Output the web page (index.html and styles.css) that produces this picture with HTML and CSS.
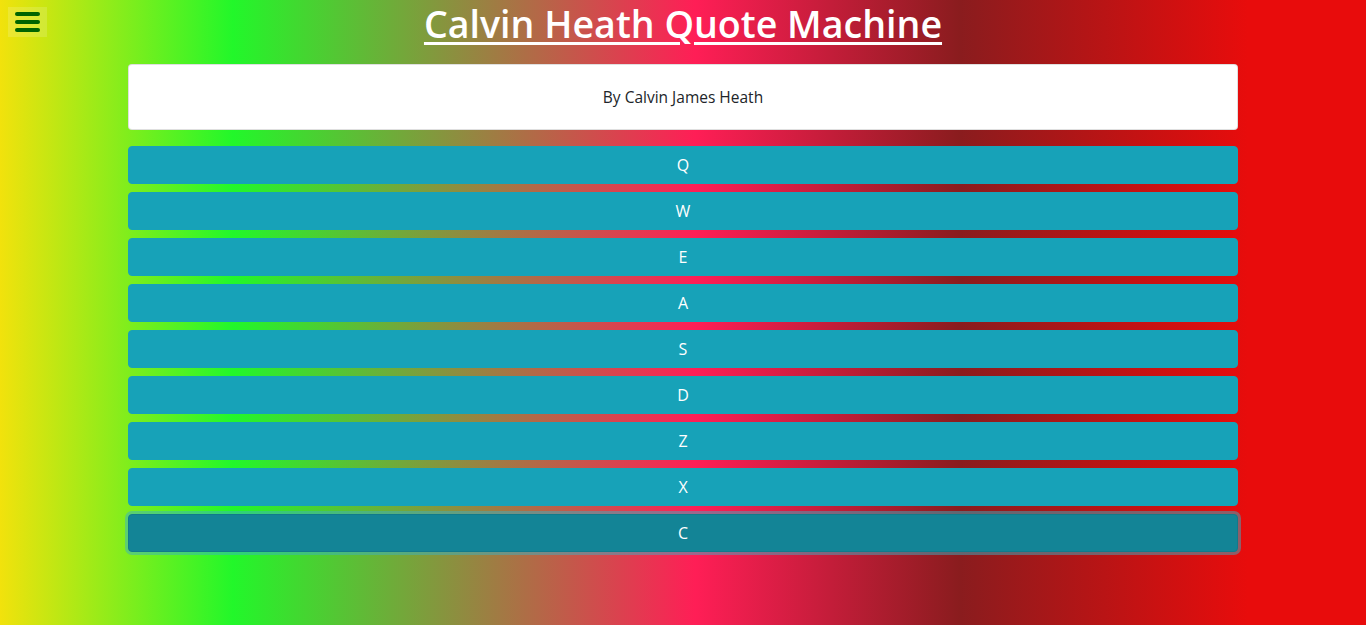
FILE: index.html
```html
<!DOCTYPE html>
<html lang="en">
<head>
<meta charset="UTF-8" />
<meta name="viewport" content="width=device-width, initial-scale=1" />
<title>Calvin Heath Quote Machine</title>
<link rel="stylesheet" href="styles.css">
</head>
<body>

<div class="menu-btn">
  <span></span>
  <span></span>
  <span></span>
</div>

<div class="container">
  <h1 class="title">Calvin Heath Quote Machine</h1>

  <div class="card">
    <div class="card-body">By Calvin James Heath</div>
  </div>

  <div class="keys">
    <button class="btn">Q</button>
    <button class="btn">W</button>
    <button class="btn">E</button>
    <button class="btn">A</button>
    <button class="btn">S</button>
    <button class="btn">D</button>
    <button class="btn">Z</button>
    <button class="btn">X</button>
    <button class="btn active">C</button>
  </div>
</div>

</body>
</html>
```

FILE: styles.css
```css
html, body {
  height: 100%;
}
body {
  margin: 0;
  font-family: "Open Sans", "Noto Sans", sans-serif;
  font-size: 16px;
  color: #212529;
  background: linear-gradient(to right, #f2e20c 0, #22f72a 233px, #ff1e56 695px, #8a1c1e 960px, #e80c0c 1248px);
}
.menu-btn {
  position: absolute;
  top: 7px;
  left: 8px;
  width: 39px;
  height: 30px;
  background: rgba(255, 255, 255, 0.15);
  display: flex;
  flex-direction: column;
  justify-content: center;
  align-items: center;
  gap: 4px;
}
.menu-btn span {
  display: block;
  width: 25px;
  height: 4px;
  border-radius: 2px;
  background: #006400;
}
.container {
  width: 1110px;
  margin: 0 auto;
}
.title {
  margin: 0 0 16px;
  text-align: center;
  color: #fff;
  font-size: 37.6px;
  font-weight: 600;
  line-height: 48px;
  text-decoration: underline;
  text-decoration-thickness: 3px;
  text-underline-offset: 4px;
}
.card {
  background: #fff;
  border: 1px solid rgba(0, 0, 0, 0.125);
  border-radius: 4px;
}
.card-body {
  padding: 20px;
  line-height: 24px;
  font-size: 15.5px;
  text-align: center;
}
.keys {
  margin-top: 16px;
  display: flex;
  flex-direction: column;
  gap: 8px;
}
.btn {
  display: block;
  width: 100%;
  padding: 6px 12px;
  font-family: inherit;
  font-size: 16px;
  line-height: 24px;
  color: #fff;
  background: #17a2b8;
  border: 1px solid #17a2b8;
  border-radius: 4px;
  cursor: pointer;
}
.btn.active {
  background: #138496;
  border-color: #117a8b;
  box-shadow: 0 0 0 3px rgba(58, 176, 195, 0.5);
}
```
